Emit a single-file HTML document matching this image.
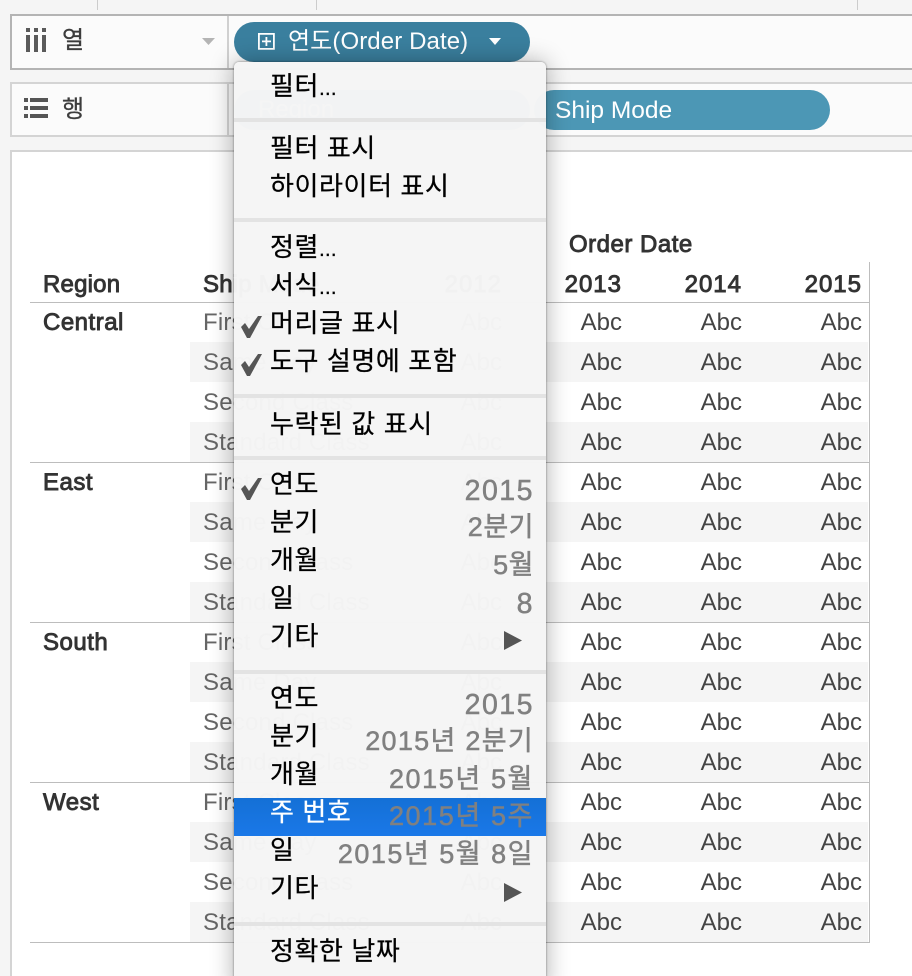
<!DOCTYPE html>
<html lang="ko"><head><meta charset="utf-8"><style>
html,body{margin:0;padding:0;width:912px;height:976px;overflow:hidden;background:#f5f5f5}
body{position:relative;font-family:"Liberation Sans","Noto Sans CJK KR",sans-serif}
div,span,svg{position:absolute}
em{font-style:normal;font-size:21px;letter-spacing:0}
.t{white-space:nowrap;line-height:40px;height:40px}
.l{left:203px;color:#666;font-size:24px;letter-spacing:.2px}
.a{color:#444;font-size:24px;width:60px;text-align:right}
.c1{left:442px}.c2{left:562px}.c3{left:682px}.c4{left:802px}
.b{color:#333;font-size:24px;letter-spacing:.5px;-webkit-text-stroke:.9px #333}
.y{color:#333;font-size:24px;letter-spacing:1px;width:70px;text-align:right;top:265px;-webkit-text-stroke:.9px #333}
.band{left:190px;width:678px;height:40px;background:#f5f5f5}
.line{left:30px;width:840px;height:1px;background:#bdbdbd}
.m{left:36px;font-size:26px;color:#000;line-height:38px;height:38px;white-space:nowrap;letter-spacing:.6px;-webkit-text-stroke:.25px #000}
.v{right:12px;font-size:27px;color:#808080;line-height:38px;height:38px;white-space:nowrap;letter-spacing:1.300px;-webkit-text-stroke:.5px #808080}
.w{font-size:28.500px;letter-spacing:1.500px}
.n{letter-spacing:.5px}
.k{letter-spacing:1.600px}
.s{left:0;width:312px;height:4px;background:#e3e3e3}
</style></head><body>
<div style="left:97px;top:0;width:1px;height:10px;background:#ccc"></div>
<div style="left:316px;top:0;width:1px;height:10px;background:#ccc"></div>
<div style="left:857px;top:0;width:1px;height:10px;background:#ccc"></div>

<div style="left:10px;top:14px;width:902px;height:52px;background:#fbfbfb;border:2px solid #b4b4b4;border-right:0"></div>
<div style="left:227px;top:16px;width:2px;height:52px;background:#d0d0d0"></div>
<svg style="left:24px;top:26px" width="26" height="28"><path fill="#5a5a5a" d="M2 2h4v4H2zM2 9h4v17H2zM10 2h4v4h-4zM10 9h4v17h-4zM18 2h4v4h-4zM18 9h4v17h-4z"/></svg>
<div class="t" style="left:62px;top:21px;font-size:24px;color:#3c3c3c;-webkit-text-stroke:.3px #3c3c3c">열</div>
<svg style="left:201px;top:37px" width="16" height="9"><path fill="#b4b4b4" d="M1 1h13L7.500 8z"/></svg>

<div style="left:10px;top:82px;width:902px;height:51px;background:#fbfbfb;border:2px solid #d4d4d4;border-right:0"></div>
<div style="left:227px;top:84px;width:2px;height:51px;background:#d4d4d4"></div>
<svg style="left:24px;top:98px" width="26" height="22"><path fill="#555" d="M0 0h4v4H0zM6 0h18v4H6zM0 8h4v4H0zM6 8h18v4H6zM0 16h4v4H0zM6 16h18v4H6z"/></svg>
<div class="t" style="left:62px;top:90px;font-size:24px;color:#3c3c3c;-webkit-text-stroke:.3px #3c3c3c">행</div>

<div style="left:234px;top:90px;width:296px;height:40px;border-radius:20px;background:#4c97b5"></div>
<div class="t" style="left:258px;top:90px;font-size:24px;color:#fff">Region</div>
<div style="left:534px;top:90px;width:296px;height:40px;border-radius:20px;background:#4c97b5"></div>
<div class="t" style="left:555px;top:91px;font-size:24.500px;color:#fff">Ship Mode</div>

<div style="left:10px;top:150px;width:902px;height:826px;background:#fff;border:2px solid #d4d4d4;border-right:0;border-bottom:0"></div>

<div class="band" style="top:342px"></div><div class="band" style="top:422px"></div>
<div class="band" style="top:502px"></div><div class="band" style="top:582px"></div>
<div class="band" style="top:662px"></div><div class="band" style="top:742px"></div>
<div class="band" style="top:822px"></div><div class="band" style="top:902px"></div>
<div class="line" style="top:302px"></div><div class="line" style="top:462px"></div>
<div class="line" style="top:622px"></div><div class="line" style="top:782px"></div>
<div class="line" style="top:942px"></div>
<div style="left:869px;top:262px;width:1px;height:680px;background:#bdbdbd"></div>

<div class="t b" style="left:569px;top:225px">Order Date</div>
<div class="t b" style="left:43px;top:265px;letter-spacing:.2px">Region</div>
<div class="t b" style="left:203px;top:265px;letter-spacing:.2px">Ship Mode</div>
<div class="t y" style="left:432px">2012</div>
<div class="t y" style="left:552px">2013</div>
<div class="t y" style="left:672px">2014</div>
<div class="t y" style="left:792px">2015</div>
<div class="t b" style="left:43px;top:303px">Central</div>
<div class="t b" style="left:43px;top:463px">East</div>
<div class="t b" style="left:43px;top:623px">South</div>
<div class="t b" style="left:43px;top:783px">West</div>

<div class="t l" style="top:303px">First Class</div><div class="t a c1" style="top:303px">Abc</div><div class="t a c2" style="top:303px">Abc</div><div class="t a c3" style="top:303px">Abc</div><div class="t a c4" style="top:303px">Abc</div>
<div class="t l" style="top:343px">Same Day</div><div class="t a c1" style="top:343px">Abc</div><div class="t a c2" style="top:343px">Abc</div><div class="t a c3" style="top:343px">Abc</div><div class="t a c4" style="top:343px">Abc</div>
<div class="t l" style="top:383px">Second Class</div><div class="t a c1" style="top:383px">Abc</div><div class="t a c2" style="top:383px">Abc</div><div class="t a c3" style="top:383px">Abc</div><div class="t a c4" style="top:383px">Abc</div>
<div class="t l" style="top:423px">Standard Class</div><div class="t a c1" style="top:423px">Abc</div><div class="t a c2" style="top:423px">Abc</div><div class="t a c3" style="top:423px">Abc</div><div class="t a c4" style="top:423px">Abc</div>
<div class="t l" style="top:463px">First Class</div><div class="t a c1" style="top:463px">Abc</div><div class="t a c2" style="top:463px">Abc</div><div class="t a c3" style="top:463px">Abc</div><div class="t a c4" style="top:463px">Abc</div>
<div class="t l" style="top:503px">Same Day</div><div class="t a c1" style="top:503px">Abc</div><div class="t a c2" style="top:503px">Abc</div><div class="t a c3" style="top:503px">Abc</div><div class="t a c4" style="top:503px">Abc</div>
<div class="t l" style="top:543px">Second Class</div><div class="t a c1" style="top:543px">Abc</div><div class="t a c2" style="top:543px">Abc</div><div class="t a c3" style="top:543px">Abc</div><div class="t a c4" style="top:543px">Abc</div>
<div class="t l" style="top:583px">Standard Class</div><div class="t a c1" style="top:583px">Abc</div><div class="t a c2" style="top:583px">Abc</div><div class="t a c3" style="top:583px">Abc</div><div class="t a c4" style="top:583px">Abc</div>
<div class="t l" style="top:623px">First Class</div><div class="t a c1" style="top:623px">Abc</div><div class="t a c2" style="top:623px">Abc</div><div class="t a c3" style="top:623px">Abc</div><div class="t a c4" style="top:623px">Abc</div>
<div class="t l" style="top:663px">Same Day</div><div class="t a c1" style="top:663px">Abc</div><div class="t a c2" style="top:663px">Abc</div><div class="t a c3" style="top:663px">Abc</div><div class="t a c4" style="top:663px">Abc</div>
<div class="t l" style="top:703px">Second Class</div><div class="t a c1" style="top:703px">Abc</div><div class="t a c2" style="top:703px">Abc</div><div class="t a c3" style="top:703px">Abc</div><div class="t a c4" style="top:703px">Abc</div>
<div class="t l" style="top:743px">Standard Class</div><div class="t a c1" style="top:743px">Abc</div><div class="t a c2" style="top:743px">Abc</div><div class="t a c3" style="top:743px">Abc</div><div class="t a c4" style="top:743px">Abc</div>
<div class="t l" style="top:783px">First Class</div><div class="t a c1" style="top:783px">Abc</div><div class="t a c2" style="top:783px">Abc</div><div class="t a c3" style="top:783px">Abc</div><div class="t a c4" style="top:783px">Abc</div>
<div class="t l" style="top:823px">Same Day</div><div class="t a c1" style="top:823px">Abc</div><div class="t a c2" style="top:823px">Abc</div><div class="t a c3" style="top:823px">Abc</div><div class="t a c4" style="top:823px">Abc</div>
<div class="t l" style="top:863px">Second Class</div><div class="t a c1" style="top:863px">Abc</div><div class="t a c2" style="top:863px">Abc</div><div class="t a c3" style="top:863px">Abc</div><div class="t a c4" style="top:863px">Abc</div>
<div class="t l" style="top:903px">Standard Class</div><div class="t a c1" style="top:903px">Abc</div><div class="t a c2" style="top:903px">Abc</div><div class="t a c3" style="top:903px">Abc</div><div class="t a c4" style="top:903px">Abc</div>

<div style="left:234px;top:22px;width:296px;height:40px;border-radius:20px;background:#3a7f9e"></div>
<svg style="left:257px;top:31px" width="20" height="20"><path fill="none" stroke="#fff" stroke-width="1.800" d="M1.900 2.900h15v15h-15zM9.400 6v9M5 10.400h9"/></svg>
<div class="t" style="left:288px;top:22px;font-size:24px;color:#fff;letter-spacing:.1px">연도(Order Date)</div>
<svg style="left:488px;top:37px" width="15" height="9"><path fill="#fff" d="M1 1h12L7 8z"/></svg>

<div style="left:234px;top:62px;width:312px;height:930px;background:rgba(245,245,245,.985);border-radius:5px 5px 0 0;box-shadow:0 0 24px rgba(0,0,0,.32),0 0 2px rgba(0,0,0,.45)">
<div class="m" style="top:5px">필터<em>...</em></div>
<div class="s" style="top:56px"></div>
<div class="m" style="top:67px">필터 표시</div>
<div class="m" style="top:105px">하이라이터 표시</div>
<div class="s" style="top:156px"></div>
<div class="m" style="top:166px">정렬<em>...</em></div>
<div class="m" style="top:204px">서식<em>...</em></div>
<div class="m" style="top:242px">머리글 표시</div>
<div class="m" style="top:280px">도구 설명에 포함</div>
<div class="s" style="top:332px"></div>
<div class="m" style="top:343px">누락된 값 표시</div>
<div class="s" style="top:394px"></div>
<div class="m" style="top:403px">연도</div><div class="v w" style="top:410px">2015</div>
<div class="m" style="top:441px">분기</div><div class="v n" style="top:446px">2분기</div>
<div class="m" style="top:479px">개월</div><div class="v n" style="top:484px">5월</div>
<div class="m" style="top:517px">일</div><div class="v w" style="top:523px">8</div>
<div class="m" style="top:555px">기타</div>
<div class="s" style="top:608px"></div>
<div class="m" style="top:617px">연도</div><div class="v w" style="top:624px">2015</div>
<div class="m" style="top:655px">분기</div><div class="v" style="top:660px">2015년 2분기</div>
<div class="m" style="top:693px">개월</div><div class="v k" style="top:698px">2015년 5월</div>
<div style="left:0;top:736px;width:312px;height:38px;background:linear-gradient(#1470d6,#1a78e8)"></div>
<div class="m" style="top:731px;color:#fff;-webkit-text-stroke:.25px #fff">주 번호</div><div class="v k" style="top:735px">2015년 5주</div>
<div class="m" style="top:769px">일</div><div class="v" style="top:773px;letter-spacing:1.500px">2015년 5월 8일</div>
<div class="m" style="top:807px">기타</div>
<div class="s" style="top:860px"></div>
<div class="m" style="top:870px">정확한 날짜</div>
</div>

<svg style="left:0;top:0" width="912" height="976"><g fill="#555"><path d="M241 327l4-4 4 6 9-13h4l-12 22h-3z"/><path d="M241 365l4-4 4 6 9-13h4l-12 22h-3z"/><path d="M241 489l4-4 4 6 9-13h4l-12 22h-3z"/><path d="M504 631l18 9.500-18 9.500z"/><path d="M504 883l18 9.500-18 9.500z"/></g></svg>
</body></html>
